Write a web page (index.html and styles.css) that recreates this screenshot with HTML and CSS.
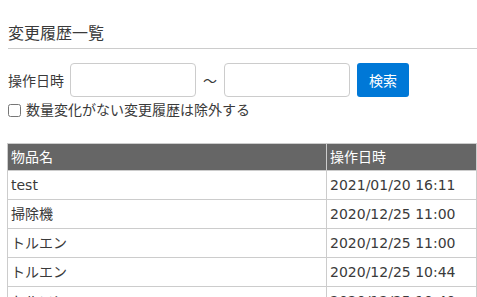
FILE: index.html
```html
<!DOCTYPE html>
<html>
<head>
    <title>変更履歴一覧</title>
    <link rel="stylesheet" href="styles.css">
</head>
<body>
    <div id="history-container">
        <h2 class="page-title">変更履歴一覧</h2>

        <form id="search-form" class="search-form">
            <div class="search-row">
                <label for="date-from" class="search-label">操作日時</label>
                <input type="text" id="date-from" name="date-from" class="date-input">
                <span class="range-mark">～</span>
                <input type="text" id="date-to" name="date-to" class="date-input">
                <button type="submit" class="search-button">検索</button>
            </div>
            <div class="check-row">
                <input type="checkbox" id="exclude-same" name="exclude-same" class="check-box">
                <label for="exclude-same">数量変化がない変更履歴は除外する</label>
            </div>
        </form>

        <table class="history-table">
            <thead>
                <tr>
                    <th class="col-name">物品名</th>
                    <th>操作日時</th>
                </tr>
            </thead>
            <tbody>
                <tr><td>test</td><td>2021/01/20 16:11</td></tr>
                <tr><td>掃除機</td><td>2020/12/25 11:00</td></tr>
                <tr><td>トルエン</td><td>2020/12/25 11:00</td></tr>
                <tr><td>トルエン</td><td>2020/12/25 10:44</td></tr>
                <tr><td>トルエン</td><td>2020/12/25 10:40</td></tr>
            </tbody>
        </table>
    </div>
</body>
</html>
```

FILE: styles.css
```css
body {
    font-family: "DejaVu Sans", "Noto Sans CJK JP", sans-serif;
    color: #3a3a3a;
    background-color: #ffffff;
    margin: 0;
    padding: 0;
    font-size: 14px;
}

#history-container {
    padding: 22px 0 0 8px;
}

.page-title {
    font-size: 16px;
    font-weight: normal;
    line-height: 24px;
    margin: 0;
    padding-bottom: 2px;
    border-bottom: 1px solid #ccc;
}

.search-form {
    margin: 14px 0 0 0;
}

.search-row {
    display: flex;
    align-items: center;
}

.search-label {
    margin-right: 6px;
}

.date-input {
    width: 126px;
    height: 34px;
    box-sizing: border-box;
    border: 1px solid #ccc;
    border-radius: 4px;
    padding: 4px 8px;
    font-size: 14px;
}

.range-mark {
    width: 28px;
    text-align: center;
}

.search-button {
    margin-left: 7px;
    height: 34px;
    width: 52px;
    border: none;
    border-radius: 3px;
    background-color: #0078d7;
    color: #fff;
    font-family: "DejaVu Sans", "Noto Sans CJK JP", sans-serif;
    font-size: 14px;
    cursor: pointer;
}

.check-row {
    display: flex;
    align-items: center;
    margin-top: 4px;
    line-height: 18px;
}

.check-box {
    margin: 0 5px 0 0;
    width: 13px;
    height: 13px;
}

.history-table {
    margin: 24px 0 0 -1px;
    width: 470px;
    border-collapse: collapse;
}

.history-table th,
.history-table td {
    border: 1px solid #ccc;
    text-align: left;
    padding: 4px 3px;
    line-height: 20px;
    font-weight: normal;
}

.history-table th {
    background-color: #666;
    color: #fff;
    padding: 3px 3px;
}

.history-table td {
    height: 19px;
}

.col-name {
    width: 312px;
}
```
